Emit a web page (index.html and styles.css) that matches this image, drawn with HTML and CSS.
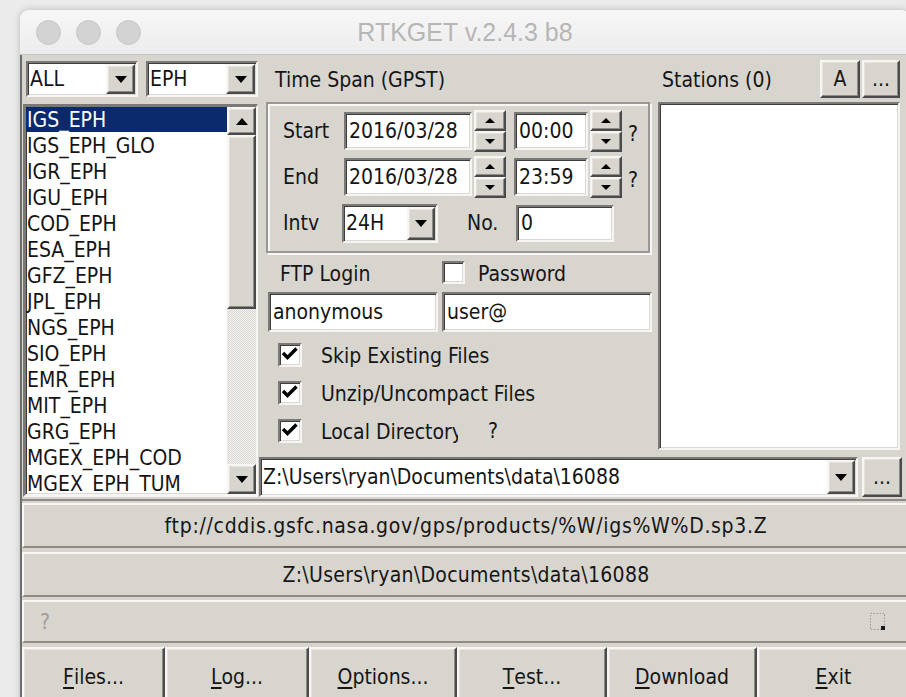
FILE: index.html
```html
<!DOCTYPE html>
<html lang="en">
<head>
<meta charset="utf-8">
<title>RTKGET v.2.4.3 b8</title>
<link rel="stylesheet" href="styles.css">
</head>
<body>
<div class="window">
  <div class="titlebar">
    <div class="lights">
      <span class="light"></span><span class="light"></span><span class="light"></span>
    </div>
    <div class="title">RTKGET v.2.4.3 b8</div>
    <div></div>
  </div>

  <div class="client">
    <div class="top">
      <!-- product type / data type selectors and the data list -->
      <div class="col-left">
        <div class="combo-row">
          <div class="combo sunken type-combo">
            <span class="combo-text">ALL</span>
            <span class="drop raised"><i class="arrow-down"></i></span>
          </div>
          <div class="combo sunken type-combo">
            <span class="combo-text">EPH</span>
            <span class="drop raised"><i class="arrow-down"></i></span>
          </div>
        </div>
        <div class="listbox sunken">
          <ul class="items">
            <li class="selected">IGS_EPH</li>
            <li>IGS_EPH_GLO</li>
            <li>IGR_EPH</li>
            <li>IGU_EPH</li>
            <li>COD_EPH</li>
            <li>ESA_EPH</li>
            <li>GFZ_EPH</li>
            <li>JPL_EPH</li>
            <li>NGS_EPH</li>
            <li>SIO_EPH</li>
            <li>EMR_EPH</li>
            <li>MIT_EPH</li>
            <li>GRG_EPH</li>
            <li>MGEX_EPH_COD</li>
            <li>MGEX_EPH_TUM</li>
          </ul>
          <div class="vscroll">
            <span class="sb-btn raised"><i class="arrow-up"></i></span>
            <span class="sb-thumb raised"></span>
            <span class="sb-track"></span>
            <span class="sb-btn sb-down raised"><i class="arrow-down"></i></span>
          </div>
        </div>
      </div>

      <div class="col-right">
        <div class="upper">
          <!-- time span, login and options -->
          <div class="col-mid">
            <div class="ts-label">Time Span (GPST)</div>
            <div class="group">
              <div class="ts-row">
                <span class="ts-lbl">Start</span>
                <span class="edit sunken date">2016/03/28</span>
                <span class="spin">
                  <span class="spin-btn raised"><i class="tri-up"></i></span>
                  <span class="spin-btn raised"><i class="tri-down"></i></span>
                </span>
                <span class="edit sunken time">00:00</span>
                <span class="spin">
                  <span class="spin-btn raised"><i class="tri-up"></i></span>
                  <span class="spin-btn raised"><i class="tri-down"></i></span>
                </span>
                <span class="q">?</span>
              </div>
              <div class="ts-row">
                <span class="ts-lbl">End</span>
                <span class="edit sunken date">2016/03/28</span>
                <span class="spin">
                  <span class="spin-btn raised"><i class="tri-up"></i></span>
                  <span class="spin-btn raised"><i class="tri-down"></i></span>
                </span>
                <span class="edit sunken time">23:59</span>
                <span class="spin">
                  <span class="spin-btn raised"><i class="tri-up"></i></span>
                  <span class="spin-btn raised"><i class="tri-down"></i></span>
                </span>
                <span class="q">?</span>
              </div>
              <div class="ts-row">
                <span class="ts-lbl">Intv</span>
                <span class="combo sunken intv">
                  <span class="combo-text">24H</span>
                  <span class="drop raised"><i class="arrow-down"></i></span>
                </span>
                <span class="no-lbl">No.</span>
                <span class="edit sunken no-edit">0</span>
              </div>
            </div>

            <div class="login-head">
              <span class="login-lbl">FTP Login</span>
              <span class="check sunken"></span>
              <span class="pass-lbl">Password</span>
            </div>
            <div class="login-edits">
              <span class="edit sunken user">anonymous</span>
              <span class="edit sunken pass">user@</span>
            </div>
            <div class="checks">
              <div class="chk-row">
                <span class="check sunken"><svg class="tick" viewBox="0 0 20 20"><path d="M3 8 L7.5 12.5 L16.5 3.5"/></svg></span>
                <span class="chk-lbl">Skip Existing Files</span>
              </div>
              <div class="chk-row">
                <span class="check sunken"><svg class="tick" viewBox="0 0 20 20"><path d="M3 8 L7.5 12.5 L16.5 3.5"/></svg></span>
                <span class="chk-lbl">Unzip/Uncompact Files</span>
              </div>
              <div class="chk-row">
                <span class="check sunken"><svg class="tick" viewBox="0 0 20 20"><path d="M3 8 L7.5 12.5 L16.5 3.5"/></svg></span>
                <span class="chk-lbl clip">Local Directory</span>
                <span class="q2">?</span>
              </div>
            </div>
          </div>

          <!-- station list -->
          <div class="col-stations">
            <div class="st-head">
              <span class="st-lbl">Stations (0)</span>
              <span class="btn raised st-a">A</span>
              <span class="btn raised st-more">...</span>
            </div>
            <div class="st-list sunken"></div>
          </div>
        </div>

        <div class="dir-row">
          <div class="combo sunken dir-combo">
            <span class="combo-text">Z:\Users\ryan\Documents\data\16088</span>
            <span class="drop raised"><i class="arrow-down"></i></span>
          </div>
          <span class="btn raised dir-more">...</span>
        </div>
      </div>
    </div>

    <div class="panel url">ftp://cddis.gsfc.nasa.gov/gps/products/%W/igs%W%D.sp3.Z</div>
    <div class="panel dir">Z:\Users\ryan\Documents\data\16088</div>
    <div class="panel status">
      <span class="status-q">?</span>
      <svg class="grip" viewBox="0 0 16 18" width="16" height="18">
        <rect x="0.5" y="0.5" width="14" height="16" fill="none" stroke="#9a9a9a" stroke-dasharray="1.5 1.5"/>
        <rect x="11" y="13" width="4" height="4" fill="#1a1a1a"/>
      </svg>
    </div>

    <div class="buttons">
      <span class="btn raised act"><u>F</u>iles...</span>
      <span class="btn raised act"><u>L</u>og...</span>
      <span class="btn raised act"><u>O</u>ptions...</span>
      <span class="btn raised act"><u>T</u>est...</span>
      <span class="btn raised act"><u>D</u>ownload</span>
      <span class="btn raised act"><u>E</u>xit</span>
    </div>
  </div>
</div>
</body>
</html>
```

FILE: styles.css
```css
* { box-sizing: border-box; }

html, body {
  margin: 0;
  height: 100%;
}

body {
  background: #ebebeb;
  overflow: hidden;
  font-family: "DejaVu Sans Condensed", "DejaVu Sans", sans-serif;
  font-stretch: condensed;
  font-size: 21px;
  color: #151515;
}

/* ---------- window frame ---------- */
.window {
  margin: 10px 0 0 20px;
  width: 890px;
  border-radius: 9px 9px 0 0;
  background: #d8d5cf;
  box-shadow: 0 0 7px rgba(0, 0, 0, 0.22);
  overflow: hidden;
}

.titlebar {
  height: 45px;
  display: grid;
  grid-template-columns: 1fr auto 1fr;
  align-items: center;
  background: linear-gradient(#f7f7f7, #ececec);
  border-bottom: 1px solid #c4c4c4;
}

.lights {
  display: flex;
  gap: 15px;
  padding-left: 16px;
}

.light {
  width: 25px;
  height: 25px;
  border-radius: 50%;
  background: #d3d3d3;
  border: 1px solid #c8c8c8;
}

.title {
  font-family: "Liberation Sans", Arial, sans-serif;
  font-stretch: normal;
  font-size: 25px;
  color: #b6b6b6;
}

.client {
  border-left: 2px solid #6d6d6d;
}

/* ---------- classic 3D edges ---------- */
.sunken {
  background: #fff;
  border: 2px solid;
  border-color: #7b7975 #f6f5f3 #f6f5f3 #7b7975;
  box-shadow: inset 1px 1px 0 #3d3d3d, inset -1px -1px 0 #dcd9d4;
}

.raised {
  background: #d8d5cf;
  border: 2px solid;
  border-color: #f7f6f4 #4a4a4a #4a4a4a #f7f6f4;
  box-shadow: inset -1px -1px 0 #8f8c88, inset 1px 1px 0 #e6e3de;
}

.arrow-down, .arrow-up, .tri-up, .tri-down {
  display: block;
  width: 0;
  height: 0;
  border-left: 6px solid transparent;
  border-right: 6px solid transparent;
}
.arrow-down { border-top: 7px solid #000; }
.arrow-up { border-bottom: 7px solid #000; }
.tri-up, .tri-down { border-left-width: 5px; border-right-width: 5px; }
.tri-up { border-bottom: 5px solid #000; }
.tri-down { border-top: 5px solid #000; }

/* ---------- combo boxes / edits ---------- */
.combo {
  display: flex;
  align-items: stretch;
  overflow: hidden;
}

.combo-text {
  flex: 1;
  display: flex;
  align-items: center;
  padding-left: 2px;
  white-space: nowrap;
  overflow: hidden;
}

.drop {
  width: 29px;
  display: flex;
  align-items: center;
  justify-content: center;
  margin: 1px;
}

.edit {
  display: flex;
  align-items: center;
  padding-left: 3px;
  white-space: nowrap;
}

.btn {
  display: flex;
  align-items: center;
  justify-content: center;
}

/* ---------- top section ---------- */
.top {
  display: flex;
  height: 446px;
  padding-top: 5px;
  border-bottom: 2px solid #8f8c88;
}

.col-left {
  width: 237px;
  display: flex;
  flex-direction: column;
}

.combo-row {
  display: flex;
  gap: 8px;
  margin: 1px 0 0 4px;
}

.type-combo {
  width: 112px;
  height: 36px;
}

.listbox {
  margin: 7px 0 0 1px;
  width: 235px;
  height: 393px;
  display: flex;
  border-width: 3px 2px 3px 3px;
}

.items {
  flex: 1;
  list-style: none;
  margin: 0;
  padding: 0;
  overflow: hidden;
}

.items li {
  height: 26px;
  line-height: 26px;
  padding-left: 1px;
  white-space: nowrap;
}

.items li.selected {
  background: #0b2a6e;
  color: #fff;
  height: 25px;
  margin-bottom: 1px;
  line-height: 27px;
}

.vscroll {
  width: 29px;
  display: flex;
  flex-direction: column;
}

.sb-btn {
  height: 28px;
  display: flex;
  align-items: center;
  justify-content: center;
}

.sb-thumb {
  height: 174px;
}

.sb-track {
  flex: 1;
  background: repeating-conic-gradient(#f3f2f0 0% 25%, #dcd9d4 0% 50%) 0 0 / 2px 2px;
}

.sb-down {
  height: 30px;
}

.col-right {
  flex: 1;
  display: flex;
  flex-direction: column;
}

.upper {
  display: flex;
  height: 392px;
}

.col-mid {
  margin-left: 7px;
  width: 386px;
  display: flex;
  flex-direction: column;
}

.ts-label {
  height: 38px;
  display: flex;
  align-items: center;
  padding: 2px 0 0 9px;
}

.group {
  margin-top: 4px;
  width: 384px;
  height: 151px;
  border: 2px solid #9b9894;
  box-shadow: inset 2px 2px 0 #f7f6f4, 2px 2px 0 #f7f6f4;
  padding: 6px 0 0 15px;
}

.ts-row {
  display: flex;
  align-items: center;
  height: 42px;
}

.ts-row + .ts-row {
  margin-top: 4px;
}

.ts-lbl {
  width: 61px;
}

.edit.date {
  width: 128px;
  height: 38px;
}

.edit.time {
  width: 74px;
  height: 38px;
  margin-left: 8px;
}

.spin {
  margin-left: 2px;
  width: 32px;
  height: 42px;
  display: flex;
  flex-direction: column;
}

.spin-btn {
  flex: 1;
  display: flex;
  align-items: center;
  justify-content: center;
}

.q {
  margin-left: 6px;
  padding-top: 6px;
}

.intv {
  width: 96px;
  height: 39px;
  margin-left: -2px;
}

.intv .drop {
  width: 28px;
}

.no-lbl {
  width: 49px;
  margin-left: 29px;
}

.no-edit {
  width: 98px;
  height: 37px;
}

.login-head {
  margin-top: 6px;
  height: 26px;
  display: flex;
  align-items: center;
}

.login-lbl {
  width: 176px;
  padding: 3px 0 0 14px;
}

.check {
  width: 24px;
  height: 24px;
  display: flex;
  align-items: center;
  justify-content: center;
  flex: none;
}

.login-head .check {
  width: 23px;
  height: 23px;
}

.pass-lbl {
  margin-left: 13px;
  padding-top: 3px;
}

.login-edits {
  margin-top: 7px;
  display: flex;
  height: 40px;
}

.edit.user {
  margin-left: 2px;
  width: 170px;
}

.edit.pass {
  margin-left: 4px;
  width: 210px;
}

.checks {
  margin-top: 4px;
}

.chk-row {
  height: 38px;
  display: flex;
  align-items: center;
  padding-left: 12px;
}

.tick {
  width: 20px;
  height: 20px;
}

.tick path {
  fill: none;
  stroke: #000;
  stroke-width: 3.4;
}

.chk-lbl {
  margin-left: 19px;
  padding-top: 2px;
  white-space: nowrap;
}

.chk-lbl.clip {
  width: 137px;
  overflow: hidden;
}

.q2 {
  margin-left: 30px;
}

.col-stations {
  margin-left: 6px;
  width: 242px;
  display: flex;
  flex-direction: column;
}

.st-head {
  height: 38px;
  display: flex;
  align-items: stretch;
}

.st-lbl {
  flex: 1;
  display: flex;
  align-items: center;
  padding: 2px 0 0 4px;
}

.st-a {
  width: 40px;
}

.st-more {
  width: 38px;
  margin-left: 2px;
}

.st-list {
  margin-top: 4px;
  height: 348px;
}

.dir-row {
  margin-top: 5px;
  height: 40px;
  display: flex;
  gap: 4px;
}

.dir-combo {
  width: 599px;
}

.dir-combo .drop {
  width: 28px;
}

.dir-more {
  width: 40px;
}

/* ---------- status panels ---------- */
.panel {
  height: 45px;
  display: flex;
  align-items: center;
  justify-content: center;
  border: 2px solid;
  border-color: #f7f6f4 #8f8c88 #8f8c88 #f7f6f4;
}

.panel.url {
  margin-top: 2px;
  letter-spacing: 0.7px;
}

.panel.dir {
  margin-top: 4px;
  letter-spacing: 0.3px;
}

.panel.status {
  margin-top: 3px;
  height: 43px;
  justify-content: space-between;
  padding: 0 22px 0 16px;
}

.status-q {
  color: #a19e9a;
}

.buttons {
  margin-top: 4px;
  display: grid;
  grid-template-columns: 143px 144px 148px 150px 150px 1fr;
}

.act {
  height: 60px;
}

.act u {
  text-underline-offset: 3px;
}
```
